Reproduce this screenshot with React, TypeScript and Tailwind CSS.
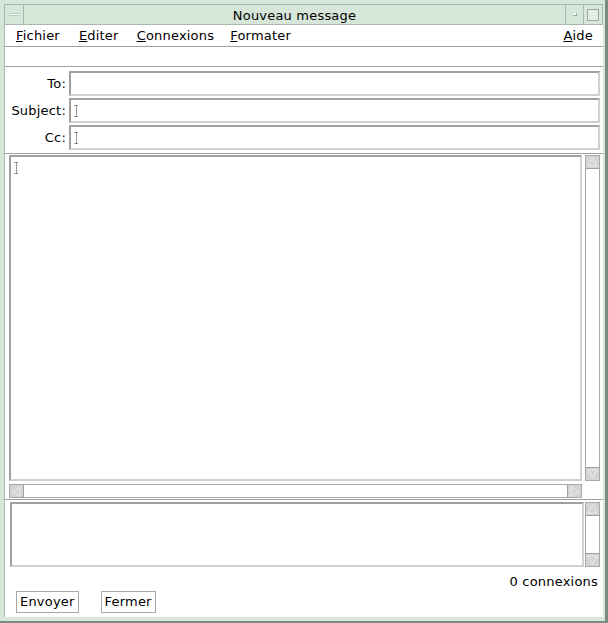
import React from "react";

const font = { fontFamily: '"DejaVu Sans", Verdana, sans-serif', letterSpacing: "0.2px" };

function Arrow({ dir }: { dir: "up" | "down" | "left" | "right" }) {
  const pts: Record<string, string> = {
    up: "6.5,2 11,10 2,10",
    down: "2,2 11,2 6.5,10",
    left: "2,6.5 10,2 10,11",
    right: "3,2 11,6.5 3,11",
  };
  return (
    <div className="w-[13px] h-[12px] bg-[#d4d4d4] flex items-center justify-center shrink-0">
      <svg width="13" height="12" viewBox="0 0 13 12">
        <polygon points={pts[dir]} fill="none" stroke="#ffffff" strokeWidth="1" strokeDasharray="1 1" />
      </svg>
    </div>
  );
}

function VScroll({ className }: { className: string }) {
  return (
    <div className={"flex flex-col border border-[#a8a8a8] bg-white " + className}>
      <Arrow dir="up" />
      <div className="flex-1 border-y border-[#a0a0a0] bg-white" />
      <Arrow dir="down" />
    </div>
  );
}

function IBeam() {
  return (
    <svg width="5" height="12" viewBox="0 0 5 12" className="shrink-0">
      <path d="M0.5 0.5 H4.5 M2.5 0.5 V11.5 M0.5 11.5 H4.5" stroke="#333" strokeWidth="1" fill="none" strokeDasharray="1 1" />
    </svg>
  );
}

function Field({ label, cursor }: { label: string; cursor?: boolean }) {
  return (
    <div className="flex items-center h-[25px]">
      <div className="w-[62px] text-right text-[13px] text-black pr-[1px]">{label}</div>
      <div className="ml-[2px] flex-1 h-[25px] border-2 border-t-[#a0a0a0] border-l-[#a0a0a0] border-r-[#d0d0d0] border-b-[#d0d0d0] bg-white flex items-center pl-[3px]">
        {cursor && <IBeam />}
      </div>
    </div>
  );
}

export default function App() {
  return (
    <div
      className="w-[608px] h-[623px] bg-[#d6e6d9] flex flex-col border-r-[3px] border-r-[#7d8a80] border-b-[2px] border-b-[#7d8a80] overflow-hidden"
      style={font}
    >
      {/* Title bar */}
      <div className="h-[25px] flex pt-[4px] pl-[4px] pr-[2px] shrink-0">
        <div className="w-[20px] border border-[#a9b8ac] flex items-center justify-center">
          <div className="w-[11px] h-[3px] bg-[#f4faf5] border border-[#b9c8bc] rounded-[1px]" />
        </div>
        <div className="flex-1 border-t border-b border-[#a9b8ac] flex items-center justify-center text-[13px] text-black pt-[2px]">
          Nouveau message
        </div>
        <div className="w-[19px] border border-[#a9b8ac] flex items-center justify-center">
          <div className="w-[4px] h-[3px] bg-[#f4faf5] border-r border-b border-[#9aa99d]" />
        </div>
        <div className="w-[19px] border border-l-0 border-[#a9b8ac] flex items-center justify-center">
          <div className="w-[12px] h-[12px] border border-[#9aa99d] bg-[#e2eee4]" />
        </div>
      </div>

      {/* Content */}
      <div className="flex-1 ml-[4px] mr-[2px] mb-[4px] bg-white flex flex-col border-l border-[#a9b8ac]">
        {/* Menu bar */}
        <div className="h-[22px] flex items-center text-[13px] text-black border-b border-[#a0a0a0] pl-[11px] pr-[10px] shrink-0">
          <span className="mr-[19px]"><u>F</u>ichier</span>
          <span className="mr-[18px]"><u>E</u>diter</span>
          <span className="mr-[16px]"><u>C</u>onnexions</span>
          <span><u>F</u>ormater</span>
          <span className="ml-auto"><u>A</u>ide</span>
        </div>
        {/* Toolbar */}
        <div className="h-[20px] border-b border-[#a0a0a0] shrink-0" />

        {/* Fields */}
        <div className="flex flex-col gap-[2px] pt-[4px] pr-[3px] shrink-0">
          <Field label="To:" />
          <Field label="Subject:" cursor />
          <Field label="Cc:" cursor />
        </div>

        <div className="h-[4px] border-b border-[#a0a0a0] shrink-0" />

        {/* Main text area */}
        <div className="flex gap-[3px] pl-[4px] pr-[3px] pt-[1px] h-[327px] shrink-0">
          <div className="flex-1 border-2 border-t-[#a0a0a0] border-l-[#a0a0a0] border-r-[#d0d0d0] border-b-[#d0d0d0] pl-[3px] pt-[5px]">
            <IBeam />
          </div>
          <VScroll className="w-[15px]" />
        </div>
        {/* horizontal scroll */}
        <div className="flex pl-[4px] pr-[21px] pt-[3px] shrink-0">
          <div className="flex-1 flex border border-[#a8a8a8] h-[14px]">
            <Arrow dir="left" />
            <div className="flex-1 border-x border-[#a0a0a0]" />
            <Arrow dir="right" />
          </div>
        </div>
        <div className="h-[2px] border-b border-[#a0a0a0] shrink-0" />

        {/* Secondary area */}
        <div className="flex gap-[1px] pl-[5px] pr-[3px] pt-[2px] h-[67px] shrink-0">
          <div className="flex-1 border-2 border-t-[#a0a0a0] border-l-[#a0a0a0] border-r-[#d0d0d0] border-b-[#d0d0d0]" />
          <VScroll className="w-[15px]" />
        </div>

        <div className="flex justify-end pr-[5px] pt-[5px] h-[23px] text-[13px] text-black shrink-0">0 connexions</div>

        <div className="flex gap-[22px] pl-[11px] pt-[1px] shrink-0">
          <button className="h-[22px] px-[3px] border border-[#a8a8a8] text-[13px] text-black bg-white">Envoyer</button>
          <button className="h-[22px] px-[3px] border border-[#a8a8a8] text-[13px] text-black bg-white">Fermer</button>
        </div>
      </div>
    </div>
  );
}
